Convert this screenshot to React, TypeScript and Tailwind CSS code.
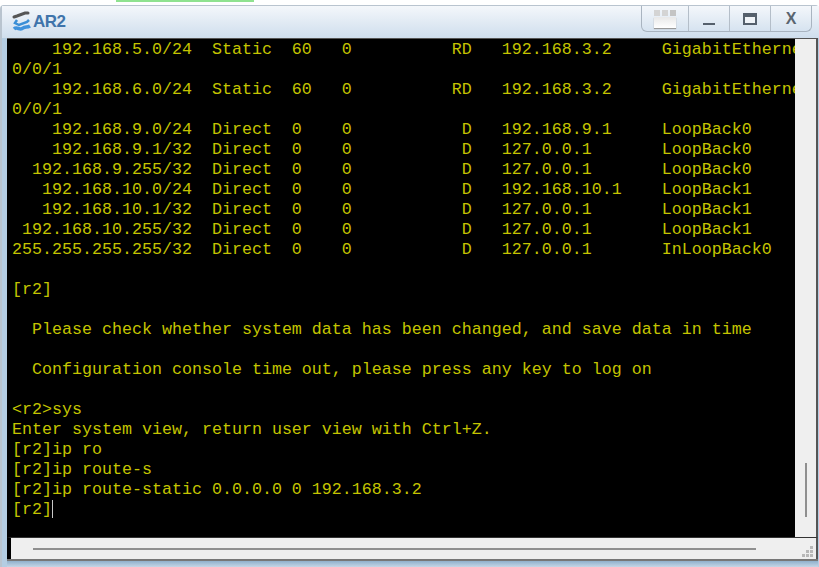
const lines = [
  "    192.168.5.0/24  Static  60   0          RD   192.168.3.2     GigabitEtherne",
  "0/0/1",
  "    192.168.6.0/24  Static  60   0          RD   192.168.3.2     GigabitEtherne",
  "0/0/1",
  "    192.168.9.0/24  Direct  0    0           D   192.168.9.1     LoopBack0",
  "    192.168.9.1/32  Direct  0    0           D   127.0.0.1       LoopBack0",
  "  192.168.9.255/32  Direct  0    0           D   127.0.0.1       LoopBack0",
  "   192.168.10.0/24  Direct  0    0           D   192.168.10.1    LoopBack1",
  "   192.168.10.1/32  Direct  0    0           D   127.0.0.1       LoopBack1",
  " 192.168.10.255/32  Direct  0    0           D   127.0.0.1       LoopBack1",
  "255.255.255.255/32  Direct  0    0           D   127.0.0.1       InLoopBack0",
  "",
  "[r2]",
  "",
  "  Please check whether system data has been changed, and save data in time",
  "",
  "  Configuration console time out, please press any key to log on",
  "",
  "<r2>sys",
  "Enter system view, return user view with Ctrl+Z.",
  "[r2]ip ro",
  "[r2]ip route-s",
  "[r2]ip route-static 0.0.0.0 0 192.168.3.2",
];

function AppIcon() {
  return (
    <svg width="21" height="24" viewBox="0 0 21 24" className="shrink-0">
      <path d="M3 7 L6 6 L14 3 L17 3" stroke="#555" strokeWidth="3" strokeLinecap="round" fill="none" />
      <path d="M6 10 L4 13 L8 15 L16 12 L18 10" stroke="#3b8fd6" strokeWidth="2.5" fill="none" />
      <path d="M3 19 C6 16 9 21 12 18 C14 16 16 18 19 16" stroke="#3f92dc" strokeWidth="3.5" fill="none" />
    </svg>
  );
}

function TitleButtons() {
  return (
    <div className="flex h-[26px] w-[171px] rounded-b-[6px] border border-t-0 border-[#a9b4c0] bg-gradient-to-b from-[#f4f7fb] to-[#d6e3f0]">
      <div className="flex w-[47px] flex-col items-center justify-center border-r border-[#b4bec9]">
        <div className="flex w-[22px] gap-[2px]">
          <div className="h-[6px] w-[6px] bg-[#d4d4d4]" />
          <div className="h-[6px] w-[6px] bg-[#d4d4d4]" />
          <div className="h-[6px] w-[6px] bg-[#c4c4c4]" />
        </div>
        <div className="mt-[1px] h-[11px] w-[22px] bg-gradient-to-b from-[#e8e8e8] to-white shadow-[0_1px_1px_#999]" />
      </div>
      <div className="flex w-[41px] items-end justify-center border-r border-[#b4bec9] pb-[6px]">
        <div className="h-[2px] w-[12px] bg-[#55606c]" />
      </div>
      <div className="flex w-[41px] items-center justify-center border-r border-[#b4bec9]">
        <div className="h-[12px] w-[14px] border-2 border-t-[4px] border-[#55606c] bg-[#f0f4f8]" />
      </div>
      <div className="flex flex-1 items-center justify-center font-['Liberation_Sans',sans-serif] text-[16px] font-bold text-[#5a6570]">
        X
      </div>
    </div>
  );
}

export default function App() {
  return (
    <div className="h-[567px] w-[819px] overflow-hidden bg-white">
      <div className="ml-[116px] h-[2px] w-[138px] bg-[#8fe28f]" />
      <div className="mt-[3px] flex h-[562px] flex-col rounded-t-[4px] border-t border-l-2 border-[#b9c4cf] bg-[#b4cde2]">
        <div className="flex h-[32px] shrink-0 items-start justify-between pr-[7px] bg-gradient-to-b from-[#f4f7fb] to-[#cfdeed]">
          <div className="flex h-[32px] items-center gap-[1px] pl-[9px]">
            <AppIcon />
            <span className="font-['Liberation_Sans',sans-serif] text-[17px] font-bold tracking-[-0.5px] text-[#3f74ab]">AR2</span>
          </div>
          <TitleButtons />
        </div>
        <div className="flex min-h-0 flex-1 flex-col pl-[5px] pr-[1px]">
          <div className="flex h-[499px] border-t border-r-2 border-[#555]">
            <div className="w-[788px] overflow-hidden bg-black pl-[5px] pt-[1px]">
              <pre className="font-['Liberation_Mono',monospace] text-[16.67px] leading-[20px] text-[#c4c400]">
                {lines.join("\n")}
                {"\n[r2]"}
                <span className="inline-block h-[18px] w-[1px] align-top bg-[#c8c8c8]" />
              </pre>
            </div>
            <div className="flex flex-1 justify-center bg-[#efefef] pt-[424px]">
              <div className="h-[54px] w-[2px] bg-[#8f8f8f]" />
            </div>
          </div>
          <div className="flex h-[22px] items-center border-t border-r-2 border-[#333] border-r-[#555] border-l-[4px] border-l-black bg-[#efefef] pl-[22px]">
            <div className="h-[2px] w-[723px] bg-[#8f8f8f]" />
            <div className="ml-auto mr-[3px] mb-[2px] grid grid-cols-3 gap-[1px] self-end">
              <div />
              <div />
              <div className="h-[3px] w-[3px] bg-[#b8b8b8]" />
              <div />
              <div className="h-[3px] w-[3px] bg-[#b8b8b8]" />
              <div className="h-[3px] w-[3px] bg-[#b8b8b8]" />
              <div className="h-[3px] w-[3px] bg-[#b8b8b8]" />
              <div className="h-[3px] w-[3px] bg-[#b8b8b8]" />
              <div className="h-[3px] w-[3px] bg-[#b8b8b8]" />
            </div>
          </div>
          <div className="h-[2px] shrink-0 bg-[#777]" />
          <div className="flex-1 bg-gradient-to-b from-[#8fb0cc] to-[#c5d6e6]" />
        </div>
      </div>
    </div>
  );
}
